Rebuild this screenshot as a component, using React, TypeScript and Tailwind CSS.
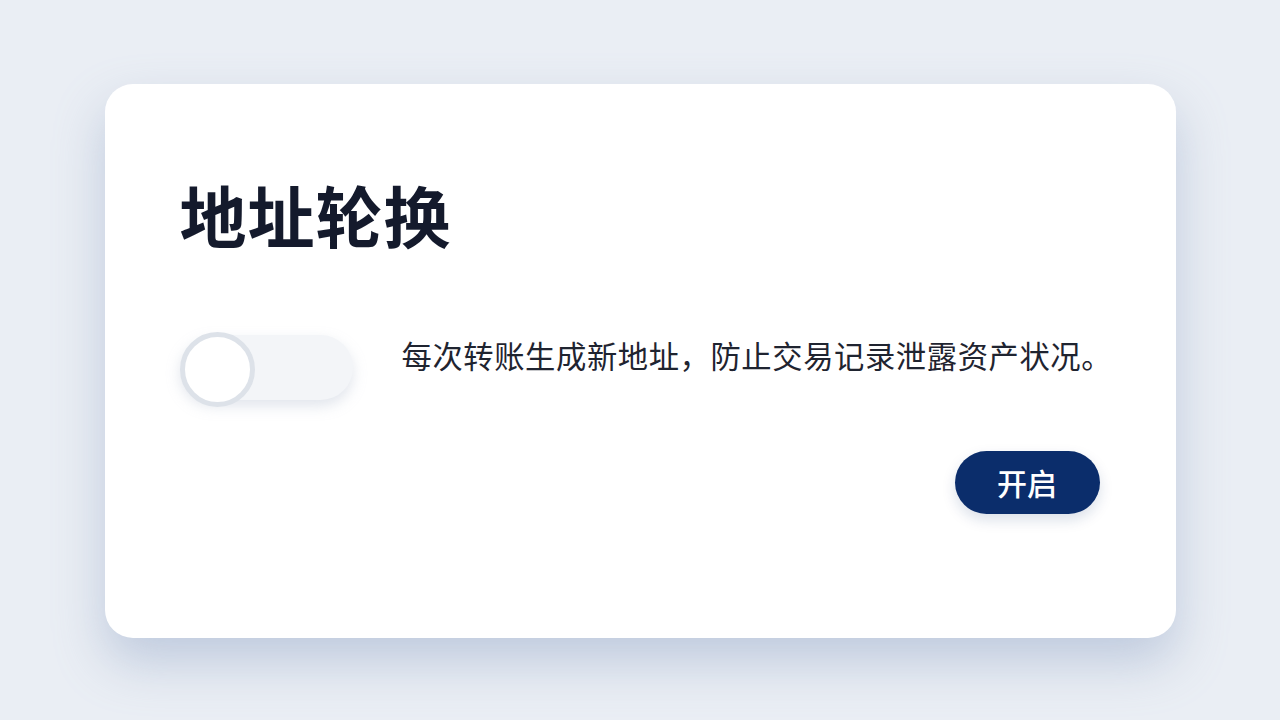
export default function App() {
  return (
    <div
      className="flex h-[720px] w-[1280px] items-start justify-center overflow-hidden bg-[#eaeef4] pt-[84px]"
      style={{ fontFamily: '"Noto Sans CJK SC", "Noto Sans", sans-serif' }}
    >
      <div className="flex h-[554px] w-[1071px] flex-col rounded-[28px] bg-white pl-[75px] pr-[76px] pt-[96px] shadow-[0_24px_50px_rgba(140,160,195,0.45)]">
        <h1 className="text-[67px] font-bold leading-none tracking-[1px] text-[#141a2c]">地址轮换</h1>

        <div className="mt-[88px] flex items-start">
          {/* toggle, off */}
          <div className="relative h-[65px] w-[173px] shrink-0 rounded-full bg-[#f3f5f8] shadow-[0_6px_14px_rgba(170,180,200,0.35)]">
            <div className="absolute left-0 top-[-3px] h-[75px] w-[75px] rounded-full border-[5px] border-[#dde2e9] bg-white" />
          </div>
          <p className="ml-[49px] whitespace-nowrap text-[30.3px] leading-[40px] tracking-[0.6px] text-[#1f2430]">
            每次转账生成新地址，防止交易记录泄露资产状况。
          </p>
        </div>

        <div className="mt-[51px] flex justify-end">
          <button className="h-[63px] w-[145px] rounded-full bg-[#0b2d6b] text-[30px] font-medium text-white shadow-[0_6px_14px_rgba(11,45,107,0.15)]">
            开启
          </button>
        </div>
      </div>
    </div>
  );
}
